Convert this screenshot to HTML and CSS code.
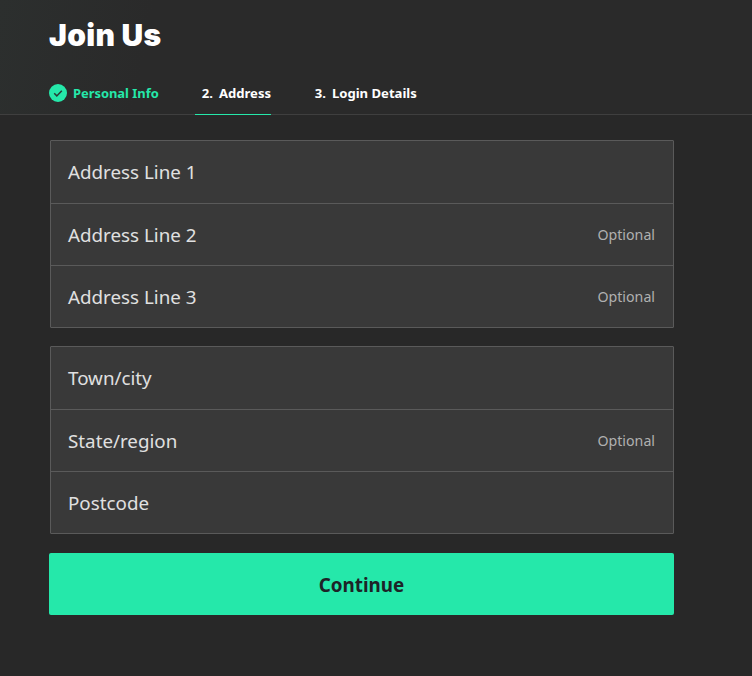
FILE: index.html
```html
<!DOCTYPE html>
<html lang="en">
<head>
  <meta charset="UTF-8">
  <title>Join Us</title>
  <link rel="stylesheet" href="styles.css">
</head>
<body>
  <header class="header">
    <h1>Join Us</h1>
    <nav class="steps">
      <div class="step done">
        <svg class="check" width="18" height="18" viewBox="0 0 18 18">
          <circle cx="9" cy="9" r="9" fill="#25e8aa"/>
          <path d="M5.2 9.3l2.6 2.6 5-5.2" fill="none" stroke="#2a3a36" stroke-width="1.5"/>
        </svg>
        Personal Info
      </div>
      <div class="step active"><span class="num">2.</span>Address</div>
      <div class="step"><span class="num">3.</span>Login Details</div>
    </nav>
  </header>

  <form class="form">
    <div class="group">
      <div class="row"><span>Address Line 1</span></div>
      <div class="row"><span>Address Line 2</span><small>Optional</small></div>
      <div class="row"><span>Address Line 3</span><small>Optional</small></div>
    </div>
    <div class="group">
      <div class="row"><span>Town/city</span></div>
      <div class="row"><span>State/region</span><small>Optional</small></div>
      <div class="row"><span>Postcode</span></div>
    </div>
    <button type="button" class="continue">Continue</button>
  </form>
</body>
</html>
```

FILE: styles.css
```css
* {
  box-sizing: border-box;
}
html, body {
  height: 100%;
}
body {
  margin: 0;
  overflow: hidden;
  font-family: "Noto Sans", "Open Sans", sans-serif;
  color: #fff;
  background-color: #282828;
}
.header {
  height: 115px;
  padding: 0 49px;
  border-bottom: 1px solid #3f3f3f;
  background: linear-gradient(100deg, #2c2f2e 0, #2a2a2a 20%, #2a2a2a 100%);
}
h1 {
  margin: 0;
  padding-top: 14px;
  font-family: Inter, "Noto Sans", sans-serif;
  font-size: 30px;
  line-height: 42px;
  font-weight: 900;
  letter-spacing: 0.3px;
}
.steps {
  display: flex;
  margin-top: 14px;
  font-size: 13.1px;
  font-weight: 700;
}
.step {
  display: flex;
  align-items: center;
  height: 45px;
  padding-top: 1px;
  white-space: nowrap;
}
.step.done {
  color: #25e8aa;
  font-size: 12.9px;
  margin-right: 36px;
}
.step.active {
  position: relative;
  width: 76px;
  padding-left: 7px;
  margin-right: 44px;
}
.step.active::after {
  content: "";
  position: absolute;
  left: 0;
  right: 0;
  bottom: 0;
  height: 1px;
  background-color: #25e8aa;
}
.check {
  margin-right: 6px;
}
.num {
  margin-right: 6px;
}
.form {
  width: 625px;
  margin: 25px 0 0 49px;
}
.group {
  margin: 0 0 18px 1px;
  border: 1px solid #5a5a5a;
  border-radius: 1px;
  background-color: #393939;
}
.row {
  display: flex;
  justify-content: space-between;
  align-items: center;
  height: 62px;
  padding: 0 18px 0 17px;
  font-size: 18.8px;
  color: #e0e0e0;
}
.row + .row {
  border-top: 1px solid #5a5a5a;
}
.row small {
  font-size: 14.2px;
  color: #b0b0b0;
}
.continue {
  display: block;
  width: 100%;
  height: 62px;
  margin-top: 19px;
  padding-top: 3px;
  border: none;
  border-radius: 2px;
  background-color: #25e8aa;
  color: #1d2327;
  font-family: inherit;
  font-size: 18.8px;
  font-weight: 700;
}
```
